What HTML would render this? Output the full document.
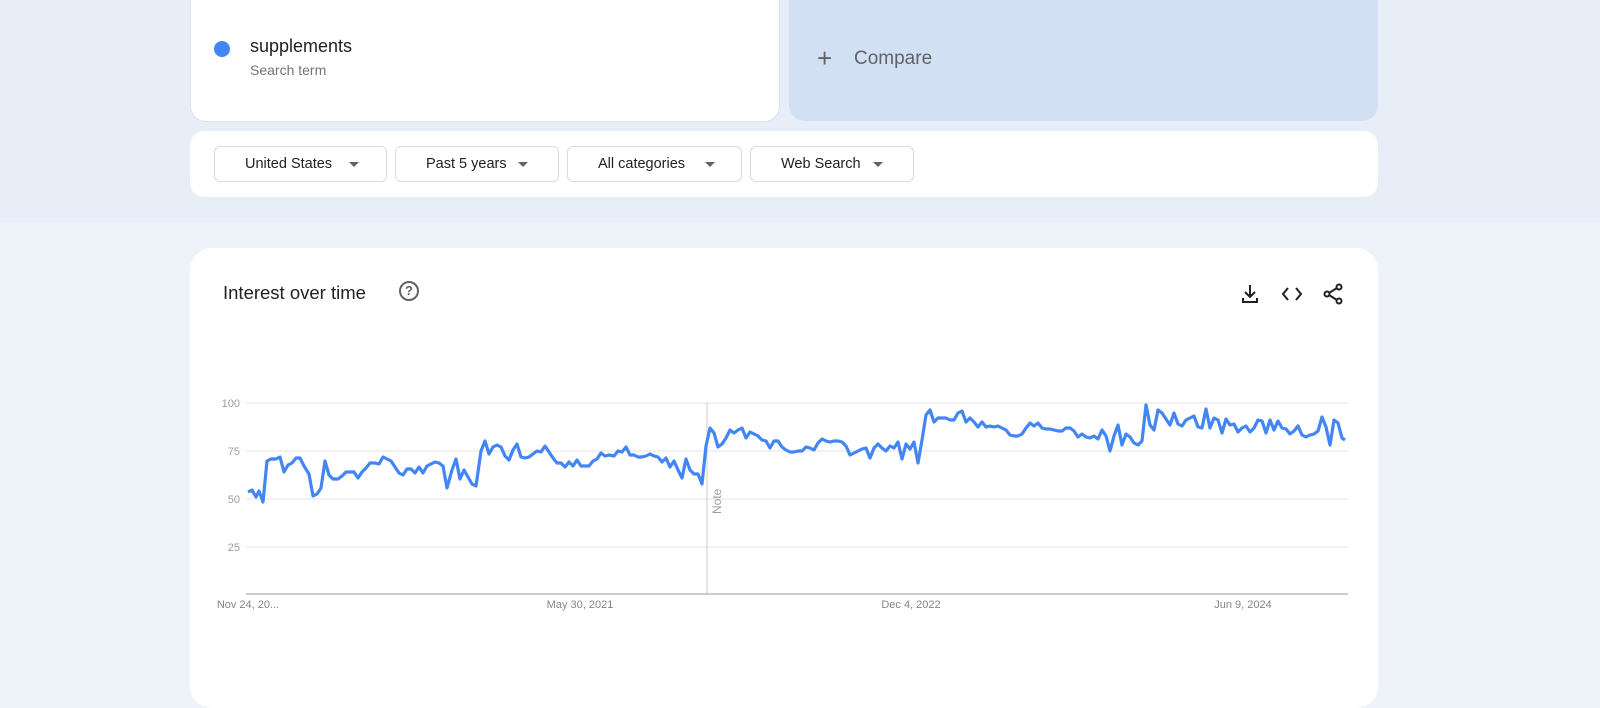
<!DOCTYPE html>
<html><head><style>
*{margin:0;padding:0;box-sizing:border-box}
body{width:1600px;height:695px;overflow:hidden;background:#eef2f9;font-family:"Liberation Sans",sans-serif;position:relative}
.top{position:absolute;left:0;top:0;width:1600px;height:222px;background:#e8eef7}
.card{position:absolute;background:#fff}
.term{left:190px;top:-20px;width:590px;height:142px;border-radius:16px;border:1px solid #dde3ec}
.cmp{position:absolute;left:789px;top:-20px;width:589px;height:141px;border-radius:16px;background:#d2e0f3}
.filters{left:190px;top:131px;width:1188px;height:66px;border-radius:14px}
.btn{position:absolute;top:15px;height:36px;border:1px solid #dadce0;border-radius:6px;font-size:14.5px;color:#202124;line-height:34px;padding-left:30px}
.btn i{position:absolute;top:15px;width:0;height:0;border-left:5px solid transparent;border-right:5px solid transparent;border-top:5px solid #5f6368}
.chart{left:190px;top:248px;width:1188px;height:460px;border-radius:22px}
.ax{position:absolute;font-size:11px;color:#9aa0a6}
</style></head><body>
<div class="top"></div>
<div class="card term">
 <div style="position:absolute;left:23px;top:60px;width:16px;height:16px;border-radius:50%;background:#4285f4"></div>
 <div style="position:absolute;left:59px;top:55px;font-size:18px;color:#202124">supplements</div>
 <div style="position:absolute;left:59px;top:81px;font-size:14px;color:#70757a">Search term</div>
</div>
<div class="cmp">
 <div style="position:absolute;left:28px;top:63px;font-size:26px;color:#5f6368;font-weight:300">+</div>
 <div style="position:absolute;left:65px;top:68px;font-size:19px;color:#5f6368">Compare</div>
</div>
<div class="card filters">
 <div class="btn" style="left:24px;width:173px">United States<i style="left:134px"></i></div>
 <div class="btn" style="left:205px;width:164px">Past 5 years<i style="left:122px"></i></div>
 <div class="btn" style="left:377px;width:175px">All categories<i style="left:137px"></i></div>
 <div class="btn" style="left:560px;width:164px">Web Search<i style="left:122px"></i></div>
</div>
<div class="card chart">
 <div style="position:absolute;left:33px;top:34px;font-size:18.5px;color:#202124">Interest over time</div>
 <div style="position:absolute;left:209px;top:33px;width:20px;height:20px;border:2px solid #5f6368;border-radius:50%;font-size:13px;font-weight:bold;color:#5f6368;text-align:center;line-height:16px">?</div>
 <svg style="position:absolute;left:1050px;top:34px" width="110" height="24" viewBox="0 0 110 24" fill="none" stroke="#202124" stroke-width="2">
  <path d="M10 3v12M5 10l5 5 5-5M3 16v4h14v-4"/>
  <path d="M48 6l-5 6 5 6M56 6l5 6-5 6"/>
  <circle cx="99" cy="5" r="2.5"/><circle cx="87" cy="12" r="2.5"/><circle cx="99" cy="19" r="2.5"/><path d="M89 11l8-5M89 13l8 5"/>
 </svg>
</div>
<svg style="position:absolute;left:0;top:0" width="1600" height="695">
 <g stroke="#e3e3e3" stroke-width="1">
  <line x1="246" y1="403" x2="1348" y2="403"/><line x1="246" y1="451" x2="1348" y2="451"/>
  <line x1="246" y1="499" x2="1348" y2="499"/><line x1="246" y1="547" x2="1348" y2="547"/>
  <line x1="707" y1="403" x2="707" y2="594" stroke="#ccc"/>
 </g>
 <line x1="246" y1="594" x2="1348" y2="594" stroke="#bbb" stroke-width="1.5"/>
 <text x="721" y="514" transform="rotate(-90 721 514)" font-size="12" fill="#9aa0a6" font-family="Liberation Sans">Note</text>
 <g font-size="11" fill="#9aa0a6" font-family="Liberation Sans" text-anchor="end">
  <text x="240" y="407">100</text><text x="240" y="455">75</text><text x="240" y="503">50</text><text x="240" y="551">25</text>
 </g>
 <g font-size="11" fill="#80868b" font-family="Liberation Sans" text-anchor="middle">
  <text x="248" y="608">Nov 24, 20...</text><text x="580" y="608">May 30, 2021</text><text x="911" y="608">Dec 4, 2022</text><text x="1243" y="608">Jun 9, 2024</text>
 </g>
 <polyline fill="none" stroke="#4285f4" stroke-width="3.2" stroke-linejoin="round" points="248,492 252,490 256,497 259,491 263,502 267,461 271,459 276,459 280,457 284,472 288,465 292,463 296,458 300,458 304,466 309,474 313,496 317,494 321,488 325,461 329,475 333,479 338,479 342,476 346,472 350,472 354,472 358,478 362,472 366,468 370,463 375,463 379,464 383,457 387,459 391,461 395,467 399,473 403,475 407,469 411,469 415,473 419,467 423,473 427,466 431,464 435,462 439,463 443,466 447,488 452,470 456,459 460,479 464,470 468,477 472,484 476,486 481,451 485,441 489,454 493,447 497,445 501,447 505,456 509,460 513,450 517,444 521,457 525,458 529,457 533,454 537,451 541,452 545,446 549,452 553,458 557,463 561,463 565,467 569,462 573,466 577,460 581,466 585,466 589,466 593,461 597,459 601,453 605,456 609,455 614,456 618,451 622,452 626,447 630,455 634,455 638,457 642,457 646,456 650,454 654,456 658,457 662,462 666,458 670,467 674,461 678,470 682,478 686,459 690,470 694,474 698,474 702,484 706,446 710,428 714,433 718,447 722,444 726,438 730,430 734,433 738,430 742,428 746,438 750,432 754,434 758,436 762,440 766,441 770,448 774,441 778,441 782,447 786,450 790,452 794,452 798,451 802,451 806,447 810,448 814,450 818,443 822,439 826,441 830,442 834,441 838,441 842,442 846,446 850,455 854,453 858,451 862,449 866,448 870,458 874,448 878,444 882,448 886,451 890,446 894,448 898,442 902,459 906,444 910,449 914,442 918,463 922,440 926,415 930,410 934,422 938,418 942,418 946,418 950,420 954,420 958,413 962,411 966,422 970,418 974,422 978,427 982,422 986,427 990,426 994,427 998,426 1002,428 1006,430 1010,435 1014,436 1018,436 1022,434 1026,428 1030,423 1034,426 1038,423 1042,428 1046,429 1050,429 1054,430 1058,431 1062,431 1066,428 1070,428 1074,431 1078,437 1082,434 1086,437 1090,438 1094,436 1098,439 1102,430 1106,436 1110,451 1114,436 1118,425 1122,445 1126,434 1130,437 1134,443 1138,445 1142,441 1146,405 1150,425 1154,430 1158,410 1162,413 1166,419 1170,425 1174,413 1178,424 1182,426 1186,420 1190,418 1194,416 1198,427 1202,428 1206,409 1210,428 1214,418 1218,420 1222,433 1226,419 1230,425 1234,424 1238,432 1242,428 1246,426 1250,432 1254,428 1258,420 1262,421 1266,433 1270,420 1274,430 1278,421 1282,428 1286,429 1290,434 1294,431 1298,426 1302,435 1306,437 1310,435 1314,434 1318,431 1322,417 1326,427 1330,445 1334,420 1338,423 1342,438 1345,440"/>
</svg>
</body></html>
